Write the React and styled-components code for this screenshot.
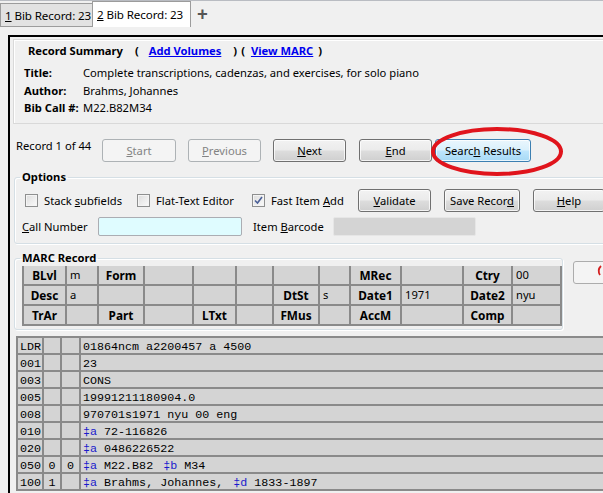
import React from "react";
import styled, { createGlobalStyle, css } from "styled-components";

const GlobalStyle = createGlobalStyle`
  html, body {
    margin: 0;
    padding: 0;
    background: #f0f0f0;
  }
  body {
    font-family: "Noto Sans", "Open Sans", sans-serif;
    font-size: 11.2px;
    color: #000;
  }
`;

const Screen = styled.div`
  width: 603px;
  height: 493px;
  overflow: hidden;
  position: relative;
  background: #f0f0f0;
`;

const TabBar = styled.div`
  display: flex;
  align-items: flex-end;
  height: 27px;
  box-sizing: border-box;
  border-top: 1px solid #b9bcc2;
`;

const Tab = styled.div`
  box-sizing: border-box;
  display: flex;
  align-items: center;
  padding-left: 4px;
  width: ${(p) => p.$w}px;
  height: ${(p) => (p.$active ? 26 : 24)}px;
  background: ${(p) => (p.$active ? "#fff" : "#e2e2e2")};
  border: 1px solid #9c9c9c;
  border-bottom: ${(p) => (p.$active ? "none" : "1px solid #9c9c9c")};
  margin-left: ${(p) => (p.$active ? -1 : 0)}px;
  font-size: 11.6px;
  letter-spacing: -0.1px;
  white-space: nowrap;
  overflow: hidden;
`;

const AddTab = styled.span`
  align-self: center;
  margin-left: 6px;
  font-size: 19px;
  font-weight: bold;
  color: #555;
  line-height: 1;
`;

const Frame = styled.div`
  margin: 8px 0 0 8px;
  border-top: 2px solid #000;
  border-left: 2px solid #000;
  padding: 2px 0 0 3px;
  width: 640px;
  height: 470px;
`;

const Summary = styled.div`
  box-sizing: border-box;
  height: 85px;
  border: 1px solid #d9d9d9;
  box-shadow: inset 1px 1px 0 #fff;
  padding: 3px 0 0 10px;
`;

const SummaryHead = styled.div`
  display: flex;
  font-weight: bold;
  line-height: 16px;
  margin-left: 4px;
  white-space: nowrap;
`;

const Sep = styled.span`
  margin-left: ${(p) => p.$ml}px;
`;

const Link = styled.a`
  margin-left: ${(p) => p.$ml}px;
  color: #0000ee;
  text-decoration: underline;
  cursor: pointer;
`;

const InfoGrid = styled.div`
  display: grid;
  grid-template-columns: 59px auto;
  line-height: 17.5px;
  margin-top: 5px;
`;

const InfoLabel = styled.span`
  font-weight: bold;
`;

const NavRow = styled.div`
  box-sizing: border-box;
  display: flex;
  align-items: flex-start;
  height: 45px;
  padding: 15px 0 0 3px;
`;

const RecordCount = styled.span`
  width: 86px;
  line-height: 14px;
  white-space: nowrap;
`;

const Btn = styled.button`
  box-sizing: border-box;
  flex: none;
  height: 23px;
  width: ${(p) => p.$w}px;
  margin-right: ${(p) => p.$mr || 0}px;
  padding: 0;
  font: inherit;
  color: #000;
  border: 1px solid #707070;
  border-radius: 3px;
  background: linear-gradient(#f2f2f2 0%, #ebebeb 48%, #dddddd 52%, #cfcfcf 100%);
  box-shadow: inset 0 0 0 1px rgba(255, 255, 255, 0.75);
  white-space: nowrap;
  overflow: hidden;
  ${(p) =>
    p.$disabled &&
    css`
      color: #838383;
      border-color: #adb2b5;
      background: #f4f4f4;
      box-shadow: none;
    `}
  ${(p) =>
    p.$hot &&
    css`
      border-color: #3c7fb1;
      background: linear-gradient(#eaf6fd 0%, #d9f0fc 48%, #bee6fd 52%, #a7d9f5 100%);
    `}
`;

const U = styled.span`
  text-decoration: underline;
`;

const Annotation = styled.svg`
  position: absolute;
  left: 429px;
  top: 125px;
  pointer-events: none;
`;

const Group = styled.fieldset`
  box-sizing: border-box;
  margin: 0 0 0 1px;
  padding: ${(p) => p.$pad};
  width: ${(p) => (p.$w ? `${p.$w}px` : "auto")};
  min-width: 0;
  border: 1px solid #d5dfe5;
  border-radius: 3px;
  box-shadow: inset 1px 1px 0 #fff, 1px 1px 0 #fff;
`;

const Legend = styled.legend`
  font-weight: bold;
  padding: 0 2px;
  margin-left: -2px;
  line-height: 16px;
`;

const OptionRow = styled.div`
  display: flex;
  align-items: center;
  height: 23px;
  margin: 4px 0 0 3px;
`;

const CheckItem = styled.label`
  display: flex;
  align-items: center;
  gap: 6px;
  width: ${(p) => p.$w}px;
  flex: none;
  white-space: nowrap;
`;

const Box = styled.span`
  box-sizing: border-box;
  width: 13px;
  height: 13px;
  border: 1px solid #8e8f8f;
  background: linear-gradient(135deg, #dcdcdc, #fbfbfb);
  box-shadow: inset 0 0 0 1px #f4f4f4;
  display: flex;
  align-items: center;
  justify-content: center;
`;

const FieldRow = styled.div`
  display: flex;
  align-items: center;
  height: 19px;
  margin-top: 5px;
`;

const FieldLabel = styled.span`
  width: ${(p) => p.$w}px;
  margin-left: ${(p) => p.$ml || 0}px;
  flex: none;
  white-space: nowrap;
`;

const Input = styled.div`
  box-sizing: border-box;
  width: ${(p) => p.$w}px;
  height: 19px;
  border-radius: 2px;
  flex: none;
  border: 1px solid ${(p) => (p.$gray ? "#e6e6e6" : "#abadb3")};
  background: ${(p) => (p.$gray ? "#d4d4d4" : "#dffcff")};
`;

const MarcRow = styled.div`
  display: flex;
  align-items: flex-start;
  margin-top: 6px;
`;

const FixedGrid = styled.div`
  display: grid;
  grid-template-columns: 41px 30px 44px 47px 41px 35px 44px 29px 49px 60px 47px 47px;
  grid-auto-rows: 18px;
  gap: 2px;
  padding: 0 2px 2px 2px;
  background: #8a8a8a;
  width: max-content;
`;

const FixedCell = styled.div`
  background: #d4d4d4;
  line-height: 18px;
  white-space: nowrap;
  ${(p) =>
    p.$label
      ? css`
          font-weight: bold;
          text-align: center;
          font-size: 11.8px;
        `
      : css`
          padding-left: 3px;
        `}
`;

const SideBtn = styled.div`
  box-sizing: border-box;
  margin: 11px 0 0 10px;
  width: 40px;
  height: 23px;
  border: 1px solid #acacac;
  border-radius: 3px;
  background: #f4f4f4;
  overflow: hidden;
`;

const VarTable = styled.div`
  display: grid;
  grid-template-columns: 24px 16px 17px 560px;
  grid-auto-rows: 15px;
  gap: 2px;
  padding: 2px;
  margin: 6px 0 0 3px;
  background: #8a8a8a;
  width: max-content;
  font-family: "Liberation Mono", "Courier New", monospace;
  font-size: 11.7px;
`;

const VarCell = styled.div`
  box-sizing: border-box;
  background: #d4d4d4;
  line-height: 15px;
  padding-top: 2px;
  white-space: pre;
  overflow: hidden;
  padding-left: ${(p) => (p.$center ? 0 : 2)}px;
  text-align: ${(p) => (p.$center ? "center" : "left")};
`;

const Sub = styled.span`
  margin-left: ${(p) => (p.$first ? 0 : 10)}px;
`;

const Code = styled.span`
  color: #1a1acc;
`;

const CheckMark = () => (
  <svg width="9" height="9" viewBox="0 0 9 9">
    <path d="M1 4.5 L3.5 7 L8 1" fill="none" stroke="#4a5f97" strokeWidth="1.6" />
  </svg>
);

const fixedRows = [
  [["BLvl", 1], ["m"], ["Form", 1], [""], [""], [""], [""], [""], ["MRec", 1], [""], ["Ctry", 1], ["00"]],
  [["Desc", 1], ["a"], [""], [""], [""], [""], ["DtSt", 1], ["s"], ["Date1", 1], ["1971"], ["Date2", 1], ["nyu"]],
  [["TrAr", 1], [""], ["Part", 1], [""], ["LTxt", 1], [""], ["FMus", 1], [""], ["AccM", 1], [""], ["Comp", 1], [""]],
];

const varRows = [
  { tag: "LDR", text: "01864ncm a2200457 a 4500" },
  { tag: "001", text: "23" },
  { tag: "003", text: "CONS" },
  { tag: "005", text: "19991211180904.0" },
  { tag: "008", text: "970701s1971 nyu 00 eng" },
  { tag: "010", subs: [["a", "72-116826"]] },
  { tag: "020", subs: [["a", "0486226522"]] },
  { tag: "050", i1: "0", i2: "0", subs: [["a", "M22.B82"], ["b", "M34"]] },
  { tag: "100", i1: "1", subs: [["a", "Brahms, Johannes,"], ["d", "1833-1897"]] },
];

const CheckOption = ({ w, checked, children }) => (
  <CheckItem $w={w}>
    <Box>{checked && <CheckMark />}</Box>
    <span>{children}</span>
  </CheckItem>
);

export default function App() {
  return (
    <Screen>
      <GlobalStyle />
      <TabBar>
        <Tab $w={93}>
          <U>1</U>&nbsp;Bib Record: 23
        </Tab>
        <Tab $w={99} $active>
          <U>2</U>&nbsp;Bib Record: 23
        </Tab>
        <AddTab>+</AddTab>
      </TabBar>

      <Frame>
        <Summary>
          <SummaryHead>
            <span>Record Summary</span>
            <Sep $ml={12}>(</Sep>
            <Link $ml={10}>Add Volumes</Link>
            <Sep $ml={12}>)</Sep>
            <Sep $ml={4}>(</Sep>
            <Link $ml={6}>View MARC</Link>
            <Sep $ml={5}>)</Sep>
          </SummaryHead>
          <InfoGrid>
            <InfoLabel>Title:</InfoLabel>
            <span>Complete transcriptions, cadenzas, and exercises, for solo piano</span>
            <InfoLabel>Author:</InfoLabel>
            <span>Brahms, Johannes</span>
            <InfoLabel>Bib Call #:</InfoLabel>
            <span>M22.B82M34</span>
          </InfoGrid>
        </Summary>

        <NavRow>
          <RecordCount>Record 1 of 44</RecordCount>
          <Btn $w={74} $mr={12} $disabled>
            <U>S</U>tart
          </Btn>
          <Btn $w={73} $mr={12} $disabled>
            <U>P</U>revious
          </Btn>
          <Btn $w={73} $mr={13}>
            <U>N</U>ext
          </Btn>
          <Btn $w={73} $mr={3}>
            <U>E</U>nd
          </Btn>
          <Btn $w={96} $hot>
            Searc<U>h</U> Results
          </Btn>
        </NavRow>

        <Group $pad="0 0 7px 7px">
          <Legend>Options</Legend>
          <OptionRow>
            <CheckOption w={112}>
              Stack <U>s</U>ubfields
            </CheckOption>
            <CheckOption w={115}>Flat-Text Editor</CheckOption>
            <CheckOption w={106} checked>
              Fast Item <U>A</U>dd
            </CheckOption>
            <Btn $w={73} $mr={13}>
              <U>V</U>alidate
            </Btn>
            <Btn $w={76} $mr={13}>
              Save Recor<U>d</U>
            </Btn>
            <Btn $w={72}>
              <U>H</U>elp
            </Btn>
          </OptionRow>
          <FieldRow>
            <FieldLabel $w={76}>
              <U>C</U>all Number
            </FieldLabel>
            <Input $w={144} />
            <FieldLabel $w={80} $ml={11}>
              Item <U>B</U>arcode
            </FieldLabel>
            <Input $w={143} $gray />
          </FieldRow>
        </Group>

        <MarcRow>
          <Group $pad="0 1px 3px 7px" $w={549}>
            <Legend>MARC Record</Legend>
            <FixedGrid>
              {fixedRows.flat().map(([text, label], i) => (
                <FixedCell key={i} $label={!!label}>
                  {text}
                </FixedCell>
              ))}
            </FixedGrid>
          </Group>
          <SideBtn>
            <svg width="40" height="23" viewBox="0 0 40 23">
              <path d="M27 4 Q23 8 26 13" fill="none" stroke="#d42020" strokeWidth="1.8" />
            </svg>
          </SideBtn>
        </MarcRow>

        <VarTable>
          {varRows.map((r) => (
            <React.Fragment key={r.tag}>
              <VarCell>{r.tag}</VarCell>
              <VarCell $center>{r.i1 || ""}</VarCell>
              <VarCell $center>{r.i2 || ""}</VarCell>
              <VarCell>
                {r.text
                  ? r.text
                  : r.subs.map(([c, v], i) => (
                      <Sub key={c} $first={i === 0}>
                        <Code>‡{c}</Code> {v}
                      </Sub>
                    ))}
              </VarCell>
            </React.Fragment>
          ))}
        </VarTable>
      </Frame>

      <Annotation width="140" height="54" viewBox="0 0 140 54">
        <ellipse cx="68" cy="26.5" rx="64" ry="22.5" fill="none" stroke="#e0141c" strokeWidth="4" />
      </Annotation>
    </Screen>
  );
}
